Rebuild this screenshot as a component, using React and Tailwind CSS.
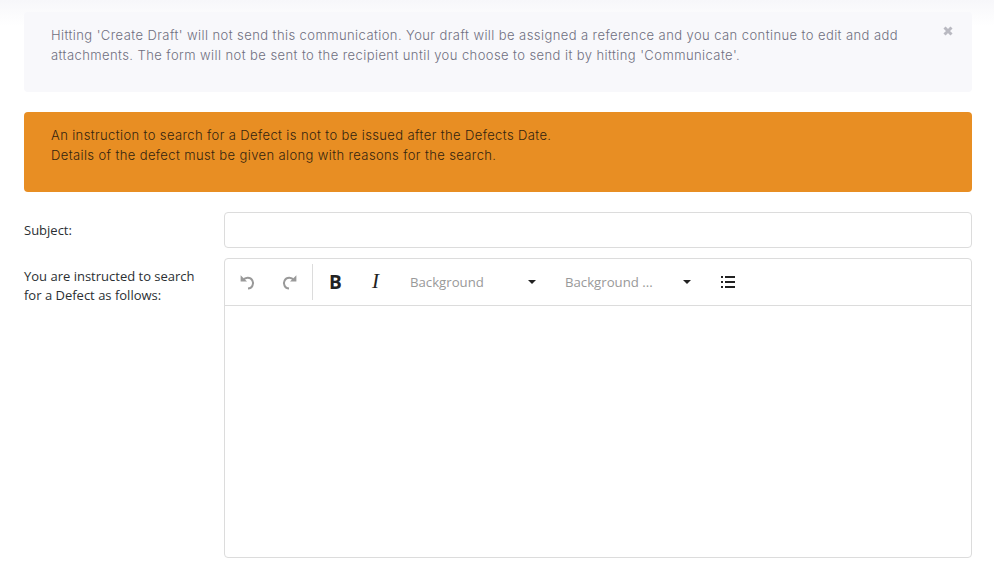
import React from 'react';

function Caret() {
  return <span className="w-0 h-0 border-x-[4px] border-x-transparent border-t-[4px] border-t-[#222]"></span>;
}

function ListIcon() {
  return (
    <svg width="14" height="12" viewBox="0 0 14 12" className="text-[#222]">
      <rect x="0" y="0" width="2" height="2" fill="currentColor" />
      <rect x="0" y="5" width="2" height="2" fill="currentColor" />
      <rect x="0" y="10" width="2" height="2" fill="currentColor" />
      <rect x="4" y="0" width="10" height="2" fill="currentColor" />
      <rect x="4" y="5" width="10" height="2" fill="currentColor" />
      <rect x="4" y="10" width="10" height="2" fill="currentColor" />
    </svg>
  );
}

function UndoIcon({ flip }) {
  return (
    <svg width="16" height="16" viewBox="0 0 16 16" className={flip ? "-scale-x-100" : ""}>
      <path d="M3.2 6.2A5.4 5.4 0 1 1 8 14.6" fill="none" stroke="#999" strokeWidth="2" />
      <path d="M0.6 1.2V7.6H7Z" fill="#999" />
    </svg>
  );
}

function CloseIcon() {
  return (
    <svg width="10" height="10" viewBox="0 0 10 10">
      <path d="M1.5 1.5L8.5 8.5M8.5 1.5L1.5 8.5" stroke="#b9b9c1" strokeWidth="3" />
    </svg>
  );
}

export default function App() {
  return (
    <div className="bg-linear-to-b from-[#f7f7fa] to-white to-[26px] h-[574px] overflow-hidden pl-6 pr-[22px] pt-3 font-['Open_Sans',sans-serif] text-[13px] text-[#2b2f33]">
      <div className="relative h-20 rounded bg-[#f8f8fb] pl-[27px] pr-[60px] pt-[13px] font-['Inter',sans-serif] font-light text-[13px] tracking-[0.42px] leading-[20px] text-[#6f6f80]">
        <p>Hitting 'Create Draft' will not send this communication. Your draft will be assigned a reference and you can continue to edit and add attachments. The form will not be sent to the recipient until you choose to send it by hitting 'Communicate'.</p>
        <span className="absolute right-[19px] top-[14px] flex"><CloseIcon /></span>
      </div>

      <div className="mt-5 h-20 rounded bg-[#e88e23] pl-[27px] pt-[13px] font-['Inter',sans-serif] font-light text-[13px] tracking-[0.38px] leading-[20px] text-[#33240f]">
        <p>An instruction to search for a Defect is not to be issued after the Defects Date.</p>
        <p>Details of the defect must be given along with reasons for the search.</p>
      </div>

      <div className="mt-5 flex items-center">
        <label className="w-[200px] pt-[1px]">Subject:</label>
        <input type="text" className="flex-1 h-9 rounded border border-[#dcdcdc] bg-white outline-none" />
      </div>

      <div className="mt-[10px] flex items-start">
        <label className="w-[200px] pt-[9px] leading-[19px]">You are instructed to search<br />for a Defect as follows:</label>
        <div className="flex-1 h-[300px] rounded border border-[#dcdcdc] flex flex-col">
          <div className="h-[47px] shrink-0 border-b border-[#dcdcdc] flex items-center">
            <div className="w-[88px] h-9 flex items-center border-r border-[#dcdcdc] pl-[15px] gap-[25px]">
              <UndoIcon />
              <UndoIcon flip />
            </div>
            <span className="ml-[16px] w-[13px] font-['Open_Sans',sans-serif] text-[19px] font-bold text-[#222]">B</span>
            <span className="ml-[30px] w-[8px] font-['Liberation_Serif',serif] text-[21px] italic text-[#222]">I</span>
            <div className="ml-[30px] w-[126px] pt-[1px] flex items-center justify-between text-[13.2px] text-[#999]">
              <span>Background</span>
              <Caret />
            </div>
            <div className="ml-[29px] w-[126px] pt-[1px] flex items-center justify-between text-[13.2px] text-[#999]">
              <span>Background ...</span>
              <Caret />
            </div>
            <span className="ml-[30px] flex"><ListIcon /></span>
          </div>
          <div className="flex-1"></div>
        </div>
      </div>
    </div>
  );
}
